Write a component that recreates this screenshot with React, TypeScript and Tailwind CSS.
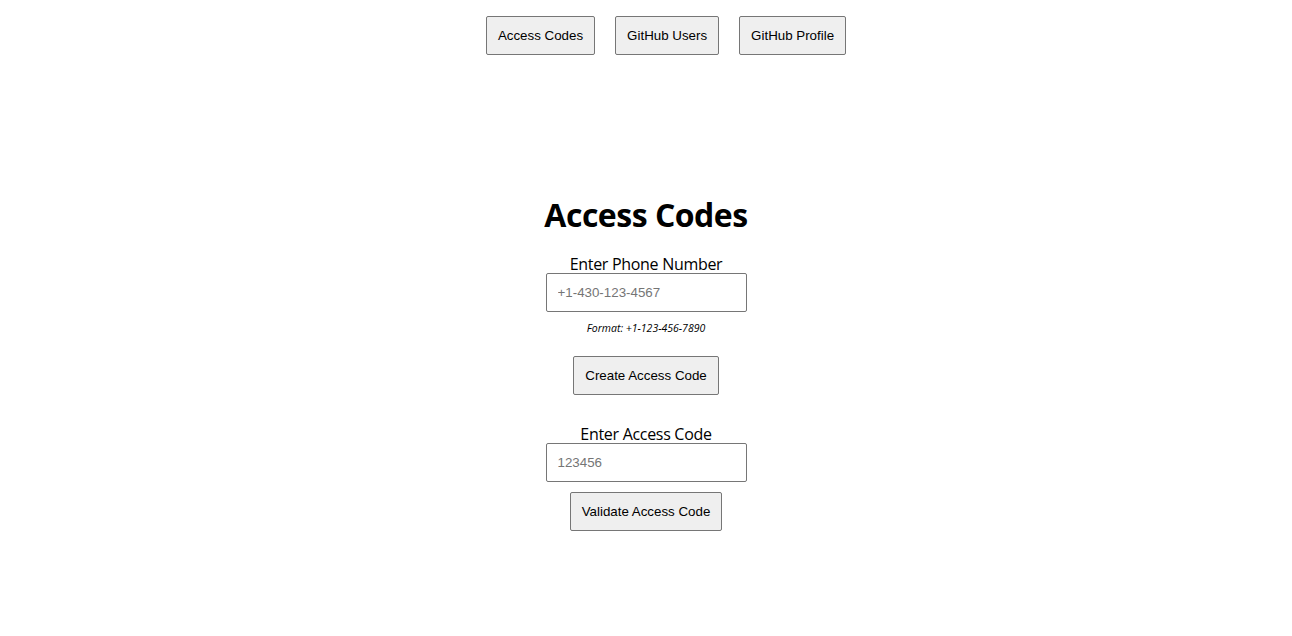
const btn =
  "h-[39px] px-[11px] bg-[#efefef] border border-[#767676] rounded-[2px] text-[13.33px] text-black font-['Liberation_Sans',Arial,sans-serif] hover:bg-[#e5e5e5]";

const input =
  "w-[201px] h-[39px] px-[11px] bg-white border border-[#767676] rounded-[2px] text-[13.33px] font-['Liberation_Sans',Arial,sans-serif] placeholder:text-[#757575] outline-none";

export default function App() {
  return (
    <div className="min-h-screen bg-white text-black font-['Open_Sans','Noto_Sans',sans-serif]">
      {/* Nav */}
      <div className="flex justify-center gap-5 pt-4 pl-10">
        <button className={btn}>Access Codes</button>
        <button className={btn}>GitHub Users</button>
        <button className={btn}>GitHub Profile</button>
      </div>

      <div className="flex flex-col items-center mt-[136px]">
        <h1 className="text-[32px] font-bold leading-[48px] tracking-[-0.5px]">Access Codes</h1>

        <label className="mt-[16px] text-[16px] leading-[18px] tracking-[-0.3px]">Enter Phone Number</label>
        <input className={input} placeholder="+1-430-123-4567" />
        <p className="mt-[9px] text-[10.5px] italic leading-[14px]">Format: +1-123-456-7890</p>

        <button className={`${btn} mt-[21px]`}>Create Access Code</button>

        <label className="mt-[30px] text-[16px] leading-[18px] tracking-[-0.3px]">Enter Access Code</label>
        <input className={input} placeholder="123456" />
        <button className={`${btn} mt-[10px]`}>Validate Access Code</button>
      </div>
    </div>
  );
}
